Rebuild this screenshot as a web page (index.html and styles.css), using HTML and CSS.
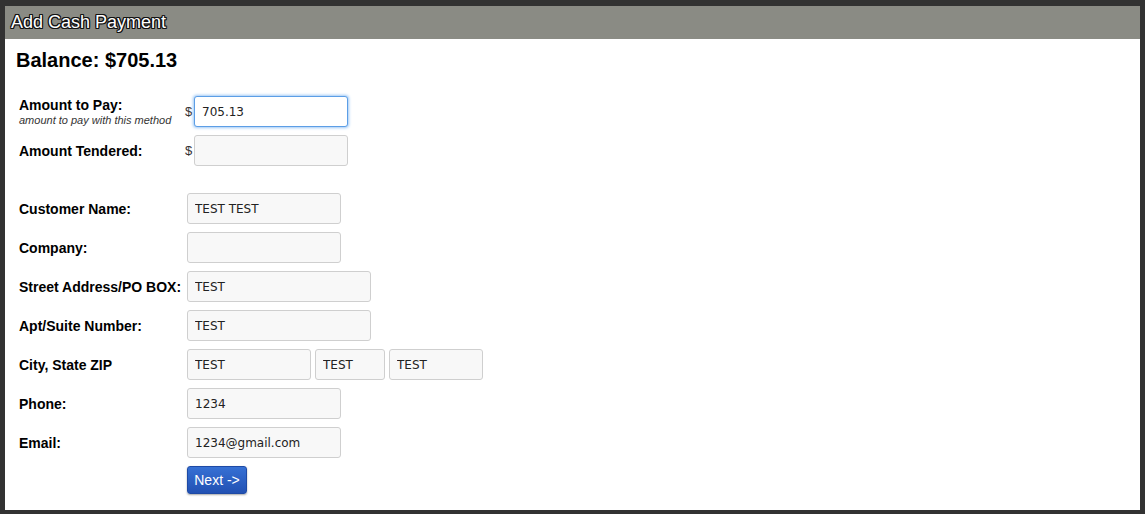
FILE: index.html
```html
<!DOCTYPE html>
<html lang="en">
<head>
<meta charset="UTF-8" />
<title>Add Cash Payment</title>
<link rel="stylesheet" href="styles.css">
</head>
<body>

<div class="dialog">
  <div class="dialog-title">Add Cash Payment</div>
  <div class="dialog-body">
    <h2 class="balance">Balance: $705.13</h2>

    <div class="pay-grid">
      <div class="label">
        Amount to Pay:
        <span class="hint">amount to pay with this method</span>
      </div>
      <div class="money">
        <span class="dollar">$</span>
        <input type="text" class="field focused" value="705.13" />
      </div>

      <div class="label">Amount Tendered:</div>
      <div class="money">
        <span class="dollar">$</span>
        <input type="text" class="field" value="" />
      </div>
    </div>

    <div class="form-grid">
      <div class="label">Customer Name:</div>
      <div><input type="text" class="field" value="TEST TEST" /></div>

      <div class="label">Company:</div>
      <div><input type="text" class="field" value="" /></div>

      <div class="label">Street Address/PO BOX:</div>
      <div><input type="text" class="field wide" value="TEST" /></div>

      <div class="label">Apt/Suite Number:</div>
      <div><input type="text" class="field wide" value="TEST" /></div>

      <div class="label">City, State ZIP</div>
      <div class="city-row">
        <input type="text" class="field city" value="TEST" />
        <input type="text" class="field state" value="TEST" />
        <input type="text" class="field zip" value="TEST" />
      </div>

      <div class="label">Phone:</div>
      <div><input type="text" class="field" value="1234" /></div>

      <div class="label">Email:</div>
      <div><input type="text" class="field" value="1234@gmail.com" /></div>

      <div></div>
      <div><button class="next-btn">Next -&gt;</button></div>
    </div>
  </div>
</div>

</body>
</html>
```

FILE: styles.css
```css
body {
  margin: 0;
  background: #323232;
  font-family: "Liberation Sans", Arial, sans-serif;
}
.dialog {
  margin: 6px 5px 0 5px;
  height: 504px;
  background: white;
  display: flex;
  flex-direction: column;
}
.dialog-title {
  background: #8a8b84;
  height: 33px;
  box-sizing: border-box;
  padding: 6px 6px 0 6px;
  color: white;
  font-size: 18px;
  line-height: 20px;
  text-shadow: -1px 0 #111, 1px 0 #111, 0 -1px #111, 0 1px #111,
    -1px -1px #111, 1px 1px #111, -1px 1px #111, 1px -1px #111;
}
.dialog-body {
  padding: 9px 14px 0 11px;
}
.balance {
  margin: 0 0 24px 0;
  font-size: 20px;
  line-height: 24px;
  font-weight: bold;
  color: black;
}
.pay-grid,
.form-grid {
  display: grid;
  align-items: center;
  row-gap: 8px;
  padding-left: 3px;
}
.pay-grid {
  grid-template-columns: 166px auto;
  margin-bottom: 27px;
}
.form-grid {
  grid-template-columns: 168px auto;
}
.label {
  font-size: 14px;
  line-height: 16px;
  font-weight: bold;
  color: black;
}
.hint {
  display: block;
  font-size: 11px;
  line-height: 13px;
  font-weight: normal;
  font-style: italic;
  color: #333;
  margin-top: 1px;
}
.money {
  display: flex;
  align-items: center;
}
.dollar {
  font-size: 13px;
  color: #333;
  width: 9px;
}
.field {
  box-sizing: border-box;
  width: 154px;
  height: 31px;
  margin: 0;
  padding: 0 7px;
  border: 1px solid #cfcfcf;
  border-radius: 3px;
  background: #f8f8f8;
  font-family: "DejaVu Sans", Verdana, sans-serif;
  font-size: 12px;
  color: #222;
  display: block;
}
.field.focused {
  background: white;
  border-color: #5c9ee6;
  box-shadow: 0 0 3px 1px #9ec8f5;
}
.field.wide {
  width: 184px;
}
.city-row {
  display: flex;
  gap: 4px;
}
.field.city {
  width: 124px;
}
.field.state {
  width: 70px;
}
.field.zip {
  width: 94px;
}
.next-btn {
  width: 60px;
  height: 28px;
  padding: 0;
  border: 1px solid #1e4aa5;
  border-radius: 3px;
  background: linear-gradient(#3670d4, #2251b3);
  box-shadow: 0 1px 2px rgba(0, 0, 0, 0.35);
  color: white;
  font-family: "Liberation Sans", Arial, sans-serif;
  font-size: 14px;
  cursor: pointer;
}
```
